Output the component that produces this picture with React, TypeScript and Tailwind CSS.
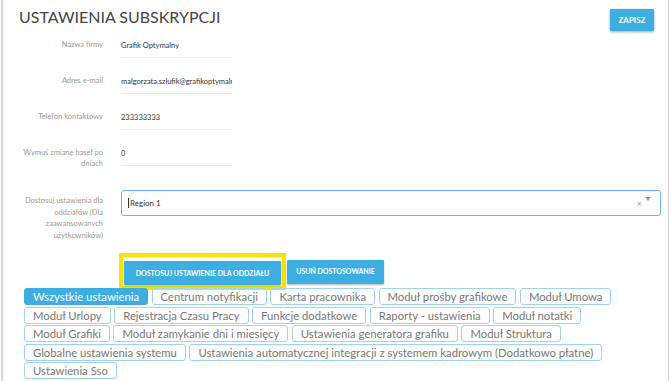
import React from 'react';

const FIELDS = [
  { label: 'Nazwa firmy', value: 'Grafik Optymalny' },
  { label: 'Adres e-mail', value: 'malgorzata.szlufik@grafikoptymalny.pl' },
  { label: 'Telefon kontaktowy', value: '233333333' },
  { label: 'Wymuś zmianę haseł po dniach', value: '0' },
];

const TABS = [
  'Wszystkie ustawienia',
  'Centrum notyfikacji',
  'Karta pracownika',
  'Moduł prośby grafikowe',
  'Moduł Umowa',
  'Moduł Urlopy',
  'Rejestracja Czasu Pracy',
  'Funkcje dodatkowe',
  'Raporty - ustawienia',
  'Moduł notatki',
  'Moduł Grafiki',
  'Moduł zamykanie dni i miesięcy',
  'Ustawienia generatora grafiku',
  'Moduł Struktura',
  'Globalne ustawienia systemu',
  'Ustawienia automatycznej integracji z systemem kadrowym (Dodatkowo płatne)',
  'Ustawienia Sso',
];

export default function App() {
  return (
    <div className="w-[670px] h-[381px] overflow-hidden bg-white font-['Lato','Liberation_Sans',sans-serif]">
      <div className="ml-[1px] mr-[1px] h-full border-l-2 border-r border-[#d6d6d6]">
        {/* Header */}
        <div className="flex justify-between items-start h-[34px] pl-[16px] pr-[14px]">
          <h1 className="pt-[7px] text-[16px] leading-[20px] text-[#444] font-normal">USTAWIENIA SUBSKRYPCJI</h1>
          <button className="mt-[9px] h-[22px] w-[44px] bg-[#3daee2] text-white text-[8px] font-bold shadow-[0_1px_3px_rgba(0,0,0,0.35)] rounded-[1px]">
            ZAPISZ
          </button>
        </div>

        {/* Fields */}
        <div className="flex flex-col gap-[12px]">
          {FIELDS.map((f, i) => (
            <div key={i} className="flex h-[24px]">
              <div className="w-[100px] pt-[5px] text-right text-[7.5px] leading-[11px] text-[#9a9a9a]">
                {i === 3 ? (
                  <>Wymuś zmianę haseł po<br />dniach</>
                ) : (
                  f.label
                )}
              </div>
              <input
                readOnly
                value={f.value}
                className="ml-[18px] w-[111px] h-[24px] p-0 border-0 border-b border-[#ececec] outline-none bg-transparent text-[7.5px] text-[#333] font-['Lato','Liberation_Sans',sans-serif]"
              />
            </div>
          ))}
        </div>

        {/* Branch select */}
        <div className="flex mt-[24px]">
          <div className="w-[100px] pt-[5px] text-right text-[7.5px] leading-[11.5px] text-[#9a9a9a]">
            Dostosuj ustawienia dla oddziałów (Dla zaawansowanych użytkowników)
          </div>
          <div className="ml-[18px] w-[540px] h-[26px] border border-[#6fb0ff] rounded-[3px] flex items-center pl-[6px] relative">
            <span className="w-px h-[10px] bg-[#333] mr-[1px]"></span>
            <span className="text-[8px] text-[#333]">Region 1</span>
            <span className="absolute right-[18px] top-[8px] text-[9px] text-[#999] leading-none">×</span>
            <span className="absolute right-[9px] top-[6px] w-0 h-0 border-l-[3px] border-r-[3px] border-t-[4px] border-l-transparent border-r-transparent border-t-[#999]"></span>
          </div>
        </div>

        {/* Action buttons */}
        <div className="flex items-center mt-[12px] pl-[116px]">
          <div className="border-4 border-[#f7e300] p-px">
            <button className="h-[24px] w-[157px] bg-[#3daee2] text-white text-[7px] font-bold shadow-[0_1px_2px_rgba(0,0,0,0.3)] rounded-[1px]">
              DOSTOSUJ USTAWIENIE DLA ODDZIAŁU
            </button>
          </div>
          <button className="ml-px h-[24px] w-[97px] bg-[#3daee2] text-white text-[7px] font-bold shadow-[0_1px_2px_rgba(0,0,0,0.3)] rounded-[1px]">
            USUŃ DOSTOSOWANIE
          </button>
        </div>

        {/* Tabs */}
        <div className="flex flex-wrap gap-x-[3.5px] gap-y-[1.5px] mt-[-2px] pl-[21px] pr-[6px]">
          {TABS.map((t, i) => (
            <span
              key={i}
              className={
                i === 0
                  ? 'h-[17px] px-[8px] border border-[#3daee2] bg-[#3daee2] rounded-[3px] text-[11.3px] leading-[15px] text-white whitespace-nowrap'
                  : 'h-[17px] px-[8px] border border-[#9fd4ef] rounded-[3px] text-[11.3px] leading-[15px] text-[#777] whitespace-nowrap'
              }
            >
              {t}
            </span>
          ))}
        </div>
      </div>
    </div>
  );
}
